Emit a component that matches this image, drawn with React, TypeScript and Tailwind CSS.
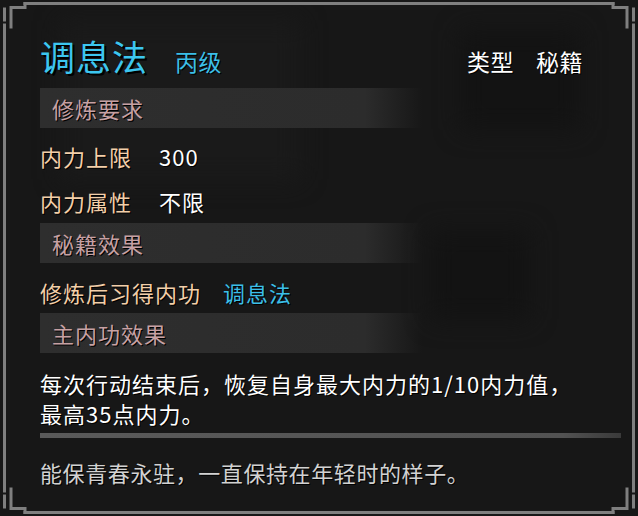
import React from "react";

const FONT = { fontFamily: '"Noto Sans CJK SC", "Noto Sans", sans-serif' };

function Frame() {
  const c = "#7f7f7f";
  return (
    <svg
      className="pointer-events-none absolute inset-0"
      width={638}
      height={516}
      viewBox="0 0 638 516"
      fill="none"
    >
      <g stroke={c} strokeWidth={3} strokeLinecap="square">
        <path d="M25 3.5 H613" />
        <path d="M25 512.5 H613" />
        <path d="M4.5 25 V491" />
        <path d="M633.5 25 V491" />
        <path d="M25 3.5 V7.5 H11 V27" />
        <path d="M4.5 9 V20" />
        <path d="M613 3.5 V7.5 H627 V27" />
        <path d="M633.5 9 V20" />
        <path d="M25 512.5 V508.5 H11 V489" />
        <path d="M4.5 496 V507" />
        <path d="M613 512.5 V508.5 H627 V489" />
        <path d="M633.5 496 V507" />
      </g>
    </svg>
  );
}

function Bar({ children }: { children: React.ReactNode }) {
  return (
    <div className="flex h-[40px] w-[382px] items-center bg-linear-to-r from-[#2e2e2e] via-[#2c2c2c] via-85% to-[#2a2a2a00] pl-[12px]">
      <span className="text-[22px] leading-none tracking-[1px] text-[#c7a1a4] [text-shadow:1px_1px_0_#000]">
        {children}
      </span>
    </div>
  );
}

export default function App() {
  return (
    <div
      className="relative h-[516px] w-[638px] overflow-hidden bg-[#171717]"
      style={FONT}
    >
      <div className="absolute left-[60px] top-[20px] h-[160px] w-[240px] rounded bg-[#1a1a1a] blur-md" />
      <div className="absolute left-[460px] top-[30px] h-[100px] w-[120px] rounded bg-[#131313] blur-md" />
      <div className="absolute left-[430px] top-[230px] h-[90px] w-[100px] rounded bg-[#131313] blur-md" />
      <Frame />
      <div className="relative flex flex-col pl-[40px] pr-[17px] pt-[30px]">
        <div className="flex h-[50px] items-center">
          <span className="text-[35px] leading-none tracking-[1px] text-[#3cc6ef] [text-shadow:2px_2px_0_#000]">
            调息法
          </span>
          <span className="ml-[27px] mt-[12px] text-[23px] leading-none tracking-[0.5px] text-[#3bbfe8] [text-shadow:1px_1px_0_#000]">
            丙级
          </span>
          <div className="ml-auto mr-[38px] mt-[12px] flex gap-[22px] text-[23px] leading-none tracking-[0.5px] text-white [text-shadow:1px_1px_0_#000]">
            <span>类型</span>
            <span>秘籍</span>
          </div>
        </div>

        <div className="mt-[8px]">
          <Bar>修炼要求</Bar>
        </div>

        <div className="pt-[5px]">
          <div className="flex h-[45px] items-center text-[22px] leading-none tracking-[1px] [text-shadow:1px_1px_0_#000]">
            <span className="text-[#f3cfa9]">内力上限</span>
            <span className="ml-[27px] text-white">300</span>
          </div>
          <div className="flex h-[45px] items-center text-[22px] leading-none tracking-[1px] [text-shadow:1px_1px_0_#000]">
            <span className="text-[#f3cfa9]">内力属性</span>
            <span className="ml-[27px] text-white">不限</span>
          </div>
        </div>

        <Bar>秘籍效果</Bar>

        <div className="flex h-[50px] items-center pt-[8px] text-[22px] leading-none tracking-[1px] [text-shadow:1px_1px_0_#000]">
          <span className="text-[#f3cfa9]">修炼后习得内功</span>
          <span className="ml-[22px] text-[#3bbfe8]">调息法</span>
        </div>

        <Bar>主内功效果</Bar>

        <div className="pt-[15px] text-[22px] leading-[30px] tracking-[1px] text-white [text-shadow:1px_1px_0_#000]">
          <div>每次行动结束后，恢复自身最大内力的1/10内力值，</div>
          <div>最高35点内力。</div>
        </div>

        <div className="mt-[5px] h-[5px] w-[581px] bg-linear-to-r from-[#5a5a5a] via-[#525252] via-90% to-[#3a3a3a]" />

        <div className="mt-[19px] text-[22px] leading-[30px] tracking-[0.6px] text-[#d2d2d2] [text-shadow:1px_1px_0_#000]">
          能保青春永驻，一直保持在年轻时的样子。
        </div>
      </div>
    </div>
  );
}
